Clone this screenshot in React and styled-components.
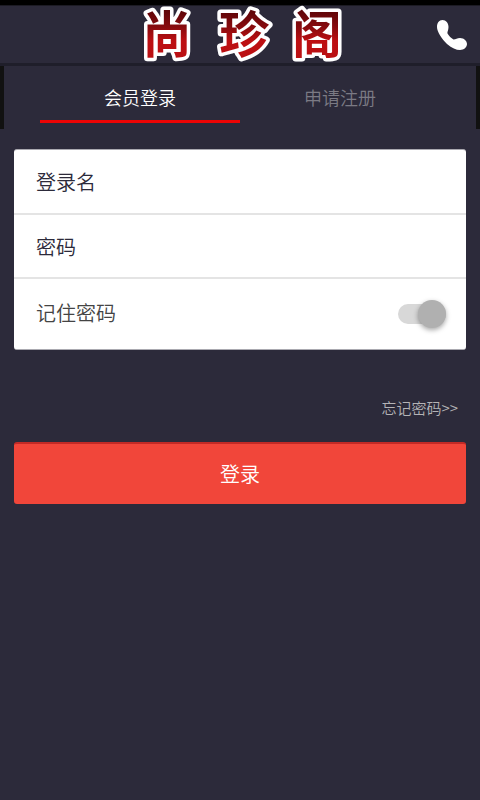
import React, { useState } from "react";
import styled, { createGlobalStyle } from "styled-components";

const GlobalStyle = createGlobalStyle`
  * { box-sizing: border-box; }
  body {
    margin: 0;
    background: #2c2a3a;
    font-family: "Noto Sans CJK SC", sans-serif;
  }
  button, input { font-family: inherit; }
`;

const Page = styled.div`
  min-height: 100vh;
  display: flex;
  flex-direction: column;
  background: #2c2a3a;
  border-top: 5px solid #000;
`;

const Header = styled.header`
  display: grid;
  grid-template-columns: 1fr auto 1fr;
  align-items: center;
  height: 61px;
  border-top: 1px solid #1c1b24;
  border-bottom: 3px solid #1f1e2a;
`;

const Brand = styled.h1`
  grid-column: 2;
  margin: 0;
  line-height: 0;
`;

const LogoDrawing = styled.svg`
  overflow: visible;
`;

const LogoText = styled.text`
  font-family: "Noto Sans CJK SC", sans-serif;
  font-size: 50px;
  font-weight: 700;
  text-anchor: middle;
  fill: url(#logoRed);
  stroke: #fff;
  stroke-width: 7px;
  stroke-linejoin: round;
  paint-order: stroke;
`;

const CallLink = styled.a`
  justify-self: end;
  display: flex;
  margin-right: 13px;
  color: #fff;
`;

const Tabs = styled.nav`
  display: grid;
  grid-template-columns: 1fr 1fr;
  height: 63px;
  padding: 0 36px 6px;
  border: solid #111;
  border-width: 0 4px;
`;

const Tab = styled.button`
  padding: 7px 0 0;
  border: 0;
  border-bottom: 3px solid ${(p) => (p.$active ? "#ec0404" : "transparent")};
  background: none;
  color: ${(p) => (p.$active ? "#fff" : "#7b7a84")};
  font-size: 18px;
  line-height: 24px;
  font-weight: 350;
  cursor: pointer;
`;

const Form = styled.form`
  display: flex;
  flex-direction: column;
  padding: 20px 14px 0;
`;

const Card = styled.div`
  overflow: hidden;
  border: 1px solid #aaa9b0;
  border-width: 1px 0;
  border-radius: 3px;
  background: #fff;
`;

const Row = styled.label`
  display: flex;
  align-items: center;
  height: 64px;
  padding: 0 20px 0 22px;
  border-bottom: 2px solid #e4e4e4;
  color: #2c2a3a;
  font-size: 20px;
  font-weight: 350;
  cursor: text;

  &:first-child {
    height: 65px;
  }
`;

const SwitchRow = styled(Row)`
  height: 70px;
  border-bottom: 0;
  color: #444;
  cursor: pointer;
`;

const RowName = styled.span`
  flex: 1 0 144px;

  ${SwitchRow} & {
    padding-bottom: 4px;
  }
`;

const Field = styled.input`
  flex: 1 1 100%;
  min-width: 0;
  height: 40px;
  padding: 0;
  border: 0;
  outline: 0;
  background: none;
  color: #2c2a3a;
  font-size: 18px;
`;

const Switch = styled.input`
  appearance: none;
  display: flex;
  align-items: center;
  justify-content: flex-end;
  width: 48px;
  height: 20px;
  margin: 0;
  border-radius: 10px;
  background: #d8d8d8;
  cursor: pointer;

  &::before {
    content: "";
    width: 28px;
    height: 28px;
    border-radius: 50%;
    background: #b0b0b0;
    box-shadow: 0 2px 5px rgba(0, 0, 0, 0.35);
  }

  &:not(:checked) {
    justify-content: flex-start;
  }
`;

const ForgotLink = styled.a`
  align-self: flex-end;
  margin: 46px 8px 22px 0;
  color: #b4b3b6;
  font-size: 15px;
  line-height: 24px;
  font-weight: 350;
  text-decoration: none;
`;

const Submit = styled.button`
  height: 62px;
  padding: 0 0 2px;
  border: 0;
  border-top: 2px solid #c22a26;
  border-radius: 3px;
  background: #f1463a;
  color: #fff;
  font-size: 20px;
  font-weight: 350;
  cursor: pointer;
`;

const letters = [
  { char: "尚", x: 39 },
  { char: "珍", x: 116 },
  { char: "阁", x: 189 },
];

function Logo() {
  return (
    <LogoDrawing width="224" height="57" viewBox="0 0 224 57" role="img" aria-label="尚珍阁">
      <defs>
        <linearGradient id="logoRed" gradientUnits="userSpaceOnUse" x1="0" y1="4" x2="0" y2="52">
          <stop offset="0" stopColor="#5c0508" />
          <stop offset="0.35" stopColor="#870b0e" />
          <stop offset="0.65" stopColor="#bd0f12" />
          <stop offset="1" stopColor="#ba1013" />
        </linearGradient>
      </defs>
      {letters.map(({ char, x }) => (
        <LogoText key={char} x={x} y="47">
          {char}
        </LogoText>
      ))}
    </LogoDrawing>
  );
}

function PhoneIcon() {
  return (
    <svg width="32" height="32" viewBox="0 0 32 32" fill="currentColor" aria-hidden="true">
      <path d="M7.500 1C4 1 2 4 2 8c0 5 5 12 10 17 5 4 9 6 13 6s7-3 7-6-3-6-7-6c-3 0-4 1.500-6.500 1.500-2.500-1.500-4.500-3.500-6-6C12 13 13.500 11.500 13.500 8 13.500 4 11 1 7.500 1z" />
    </svg>
  );
}

export default function App() {
  const [tab, setTab] = useState("login");
  const [remember, setRemember] = useState(true);

  return (
    <>
      <GlobalStyle />
      <Page>
        <Header>
          <Brand>
            <Logo />
          </Brand>
          <CallLink href="#call" aria-label="电话">
            <PhoneIcon />
          </CallLink>
        </Header>
        <Tabs>
          <Tab type="button" $active={tab === "login"} onClick={() => setTab("login")}>
            会员登录
          </Tab>
          <Tab type="button" $active={tab === "register"} onClick={() => setTab("register")}>
            申请注册
          </Tab>
        </Tabs>
        <Form onSubmit={(e) => e.preventDefault()}>
          <Card>
            <Row>
              <RowName>登录名</RowName>
              <Field type="text" name="username" autoComplete="username" />
            </Row>
            <Row>
              <RowName>密码</RowName>
              <Field type="password" name="password" autoComplete="current-password" />
            </Row>
            <SwitchRow>
              <RowName>记住密码</RowName>
              <Switch
                type="checkbox"
                role="switch"
                checked={remember}
                onChange={(e) => setRemember(e.target.checked)}
              />
            </SwitchRow>
          </Card>
          <ForgotLink href="#forgot">忘记密码&gt;&gt;</ForgotLink>
          <Submit type="submit">登录</Submit>
        </Form>
      </Page>
    </>
  );
}
